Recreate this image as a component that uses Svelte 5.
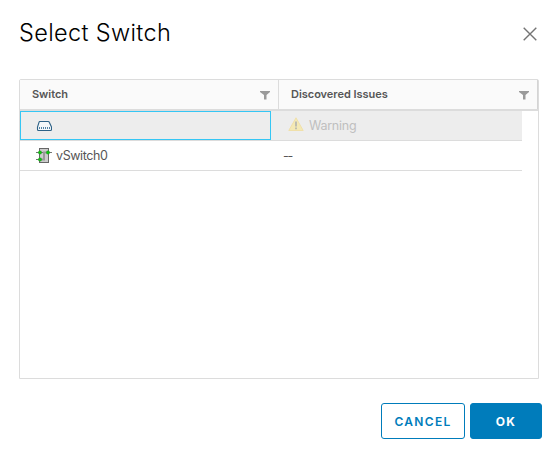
<script>
  const columns = ['Switch', 'Discovered Issues'];
</script>

<main class="dialog">
  <header class="title-bar">
    <h1>Select Switch</h1>
    <button class="close" aria-label="Close">
      <svg width="14" height="14" viewBox="0 0 14 14"><path d="M.7 .7 13.3 13.3M13.3 .7 .7 13.3" stroke="#747474" stroke-width="1.4" fill="none" /></svg>
    </button>
  </header>

  <section class="grid">
    <div class="head">
      {#each columns as label, i}
        <div class="th" class:first={i === 0}>
          <span class="label">{label}</span>
          <svg class="filter" width="10" height="9" viewBox="0 0 10 9"><path d="M0 0H10V1L6.5 4V8.5H4V4L0 1Z" fill="#9a9a9a" /></svg>
        </div>
      {/each}
    </div>
    <div class="row selected">
      <div class="cell name active">
        <svg width="16" height="12" viewBox="0 0 16 12">
          <path d="M3.8 1.5H12.2Q13 1.5 13.3 2.3L15.5 7V9.5Q15.5 10.5 14.5 10.5H2.5Q1.5 10.5 1.5 9.5V7L3 2.3Q3.2 1.5 3.8 1.5Z" fill="#f4f8fa" stroke="#2d6186" stroke-width="1.1" />
          <path d="M3 7.5H14.5M3 8.5H14.5" stroke="#5383a5" stroke-width="1" stroke-dasharray="1 1" />
        </svg>
      </div>
      <div class="cell issue disabled">
        <svg width="16" height="15" viewBox="0 0 16 15">
          <path d="M8 .8 15.2 13.5H.8Z" fill="#f4e9b5" stroke="#f0e0aa" stroke-width="1" stroke-linejoin="round" />
          <path d="M8 4.5V9.5M8 10.5V12.3" stroke="#b9b9b0" stroke-width="1.8" />
        </svg>
        <span class="warning">Warning</span>
      </div>
    </div>
    <div class="row">
      <div class="cell name">
        <svg width="16" height="16" viewBox="0 0 16 16">
          <rect x="3.5" y=".5" width="9" height="14" fill="#cbcbcb" stroke="#666" />
          <path d="M0 4.5H16M0 11.5H4" stroke="#777" stroke-width="1.2" />
          <path d="M5 11.5H8V4.5H11" stroke="#999" stroke-width="2" fill="none" />
          <g fill="#0ec70e" stroke="#268726" stroke-width=".4"><circle cx="4" cy="4.5" r="1.7" /><circle cx="12" cy="4.5" r="1.7" /><circle cx="4" cy="11.5" r="1.7" /></g>
        </svg>
        <span class="switch-name">vSwitch0</span>
      </div>
      <div class="cell issue none"><span>--</span></div>
    </div>
  </section>

  <footer>
    <button class="btn cancel"><span>CANCEL</span></button>
    <button class="btn ok"><span>OK</span></button>
  </footer>
</main>

<style>
  :global(body) { background: #fff; }
  .dialog { box-sizing: border-box; width: 560px; height: 458px; padding: 19px 18px 19px 19px; display: flex; flex-direction: column; font-family: Inter, "Liberation Sans", sans-serif; color: #565656; }
  .title-bar { display: flex; justify-content: space-between; height: 60px; flex: none; }
  h1 { margin: 0; font-size: 23.5px; line-height: 28px; font-weight: 300; letter-spacing: .35px; color: #000; white-space: nowrap; }
  button { font: inherit; padding: 0; cursor: pointer; }
  .close { border: 0; background: none; width: 14px; height: 14px; margin: 8px 5px 0 0; }
  .close svg { display: block; }
  .grid { box-sizing: border-box; width: 520px; height: 300px; flex: none; border: 1px solid #dcdcdc; border-radius: 2px 2px 0 0; }
  .head { display: flex; box-sizing: border-box; height: 31px; background: #fafafa; border-bottom: 2px solid #dcdcdc; }
  .th { box-sizing: border-box; display: flex; align-items: center; justify-content: space-between; width: 259px; padding: 0 8px 0 12px; border-right: 1px solid #d4d4d4; font-size: 11px; font-weight: 600; white-space: nowrap; }
  .th.first { border-right-color: #dcdcdc; }
  .label { padding-bottom: 2px; letter-spacing: -.03px; }
  .filter { margin-top: 2px; }
  .row { box-sizing: border-box; display: flex; width: 502px; height: 30px; border-bottom: 1px solid #dcdcdc; }
  .selected { background: #ededed; }
  .cell { box-sizing: border-box; display: flex; align-items: center; font-size: 12.5px; letter-spacing: -.4px; white-space: nowrap; }
  .cell svg { flex: none; }
  .name { width: 251px; padding-left: 16px; gap: 4px; }
  .active { border: 1px solid #35c6f4; padding-left: 15px; }
  .issue { padding-left: 17px; gap: 5px; }
  .disabled { color: #bfbfbf; }
  .disabled svg { margin-top: -2px; }
  .warning { letter-spacing: -.25px; }
  .none { padding-left: 12px; letter-spacing: -1.2px; }
  footer { display: flex; justify-content: flex-end; gap: 5px; margin-top: 24px; }
  .btn { box-sizing: border-box; height: 36px; border: 1px solid #007cbb; border-radius: 3px; font-size: 12px; font-weight: 600; letter-spacing: 1.3px; }
  .cancel { width: 84px; color: #007cbb; background: #fff; }
  .ok { width: 72px; color: #fff; background: #007cbb; font-weight: 700; }
</style>
